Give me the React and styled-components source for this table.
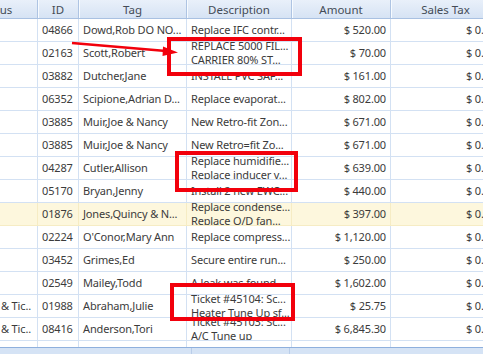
import React from 'react';
import styled, { createGlobalStyle } from 'styled-components';

const GlobalStyle = createGlobalStyle`
  html, body {
    margin: 0;
    padding: 0;
    width: 483px;
    height: 354px;
    overflow: hidden;
    background: #fff;
  }
  #root {
    height: 354px;
  }
`;

const COLS = '84px 41px 108px 105px 99px 110px';

const Screen = styled.div`
  position: relative;
  width: 483px;
  height: 354px;
  overflow: hidden;
  display: flex;
  flex-direction: column;
  font-family: 'Noto Sans', 'Open Sans', sans-serif;
  font-size: 11px;
  letter-spacing: -0.15px;
  color: #3b3b3b;
`;

const Grid = styled.div`
  margin-left: -46px;
  width: 547px;
  flex: 1;
  display: flex;
  flex-direction: column;
  min-height: 0;
`;

const HeaderRow = styled.div`
  display: grid;
  grid-template-columns: ${COLS};
  height: 19px;
  border-bottom: 1px solid #a9c1e2;
  box-sizing: border-box;
  background: linear-gradient(#e9f0fa, #d6e3f4);
`;

const HeaderCell = styled.div`
  display: flex;
  align-items: center;
  justify-content: center;
  border-right: 1px solid #aec4e3;
  box-shadow: inset 1px 0 0 #f7fbff;
  color: #444c57;
  font-size: 11.5px;
  letter-spacing: 0;
  white-space: nowrap;
  overflow: hidden;
`;

const Body = styled.div`
  flex: 1;
  overflow: hidden;
`;

const Row = styled.div`
  display: grid;
  grid-template-columns: ${COLS};
  height: 23px;
  background: ${p => (p.$highlight ? '#fdf7dd' : '#fff')};
`;

const Cell = styled.div`
  display: flex;
  flex-direction: column;
  justify-content: center;
  align-items: ${p => (p.$align === 'right' ? 'flex-end' : 'flex-start')};
  padding: ${p => (p.$align === 'right' ? '0 4px 0 3px' : '0 3px 0 4px')};
  border-right: 1px solid ${p => (p.$highlight ? '#f6ecc4' : '#d3e1f3')};
  border-bottom: 1px solid ${p => (p.$highlight ? '#f6ecc4' : '#d3e1f3')};
  box-sizing: border-box;
  overflow: hidden;
  white-space: nowrap;
  line-height: 14px;
`;

const Line = styled.span`
  display: block;
  flex-shrink: 0;
`;

const Footer = styled.div`
  height: 7px;
  box-sizing: border-box;
  border-top: 1px solid #8fb0dd;
  background: #d5e3f5;
  display: grid;
  grid-template-columns: 192px 98px 1fr;
`;

const FooterCell = styled.div`
  border-right: ${p => (p.$last ? 'none' : '1px solid #b9cde9')};
`;

const Mark = styled.div`
  position: absolute;
  border: 4px solid #f2000c;
  box-sizing: border-box;
  pointer-events: none;
`;

const Arrow = styled.svg`
  position: absolute;
  left: 0;
  top: 0;
  pointer-events: none;
`;

const headers = ['Status', 'ID', 'Tag', 'Description', 'Amount', 'Sales Tax'];

const rows = [
  { id: '04866', tag: 'Dowd,Rob DO NO...', desc: ['Replace IFC contr...'], amount: '$ 520.00' },
  { id: '02163', tag: 'Scott,Robert', desc: ['REPLACE 5000 FIL...', 'CARRIER 80% ST...'], amount: '$ 70.00' },
  { id: '03882', tag: 'Dutcher,Jane', desc: ['INSTALL PVC SAF...'], amount: '$ 161.00' },
  { id: '06352', tag: 'Scipione,Adrian D...', desc: ['Replace evaporat...'], amount: '$ 802.00' },
  { id: '03885', tag: 'Muir,Joe & Nancy', desc: ['New Retro-fit Zon...'], amount: '$ 671.00' },
  { id: '03885', tag: 'Muir,Joe & Nancy', desc: ['New Retro=fit Zo...'], amount: '$ 671.00' },
  { id: '04287', tag: 'Cutler,Allison', desc: ['Replace humidifie...', 'Replace inducer v...'], amount: '$ 639.00' },
  { id: '05170', tag: 'Bryan,Jenny', desc: ['Install 2 new EWC...'], amount: '$ 440.00' },
  { id: '01876', tag: 'Jones,Quincy & N...', desc: ['Replace condense...', 'Replace O/D fan...'], amount: '$ 397.00', highlight: true },
  { id: '02224', tag: "O'Conor,Mary Ann", desc: ['Replace compress...'], amount: '$ 1,120.00' },
  { id: '03452', tag: 'Grimes,Ed', desc: ['Secure entire run...'], amount: '$ 250.00' },
  { id: '02549', tag: 'Mailey,Todd', desc: ['A leak was found...'], amount: '$ 1,602.00' },
  { status: 'Invoiced & Tic..', id: '01988', tag: 'Abraham,Julie', desc: ['Ticket #45104: Sc...', 'Heater Tune Up sf...'], amount: '$ 25.75' },
  { status: 'Invoiced & Tic..', id: '08416', tag: 'Anderson,Tori', desc: ['Ticket #45103: Sc...', 'A/C Tune up'], amount: '$ 6,845.30' },
  { id: '', tag: '', desc: [''], amount: '', tax: '' },
];

function DataRow({ row }) {
  const hl = row.highlight;
  const tax = row.tax === undefined ? '$ 0.00' : row.tax;
  return (
    <Row $highlight={hl}>
      <Cell $highlight={hl} $align="right" style={{ paddingRight: 6 }}>
        <Line>{row.status || ''}</Line>
      </Cell>
      <Cell $highlight={hl}><Line>{row.id}</Line></Cell>
      <Cell $highlight={hl}><Line>{row.tag}</Line></Cell>
      <Cell $highlight={hl}>
        {row.desc.map((d, i) => <Line key={i}>{d}</Line>)}
      </Cell>
      <Cell $highlight={hl} $align="right"><Line>{row.amount}</Line></Cell>
      <Cell $highlight={hl} $align="right"><Line>{tax}</Line></Cell>
    </Row>
  );
}

export default function App() {
  return (
    <>
      <GlobalStyle />
      <Screen>
        <Grid>
          <HeaderRow>
            {headers.map(h => <HeaderCell key={h}>{h}</HeaderCell>)}
          </HeaderRow>
          <Body>
            {rows.map((r, i) => <DataRow key={i} row={r} />)}
          </Body>
        </Grid>
        <Footer>
          <FooterCell />
          <FooterCell />
          <FooterCell $last />
        </Footer>

        <Mark style={{ left: 167, top: 37, width: 135, height: 39 }} />
        <Mark style={{ left: 175, top: 151, width: 123, height: 41 }} />
        <Mark style={{ left: 170, top: 283, width: 125, height: 38 }} />
        <Arrow width="483" height="354" viewBox="0 0 483 354">
          <line x1="72" y1="43" x2="166" y2="51" stroke="#f2000c" strokeWidth="2.4" />
          <polygon points="178,52.5 163,46.5 162.5,56" fill="#f2000c" />
        </Arrow>
      </Screen>
    </>
  );
}
